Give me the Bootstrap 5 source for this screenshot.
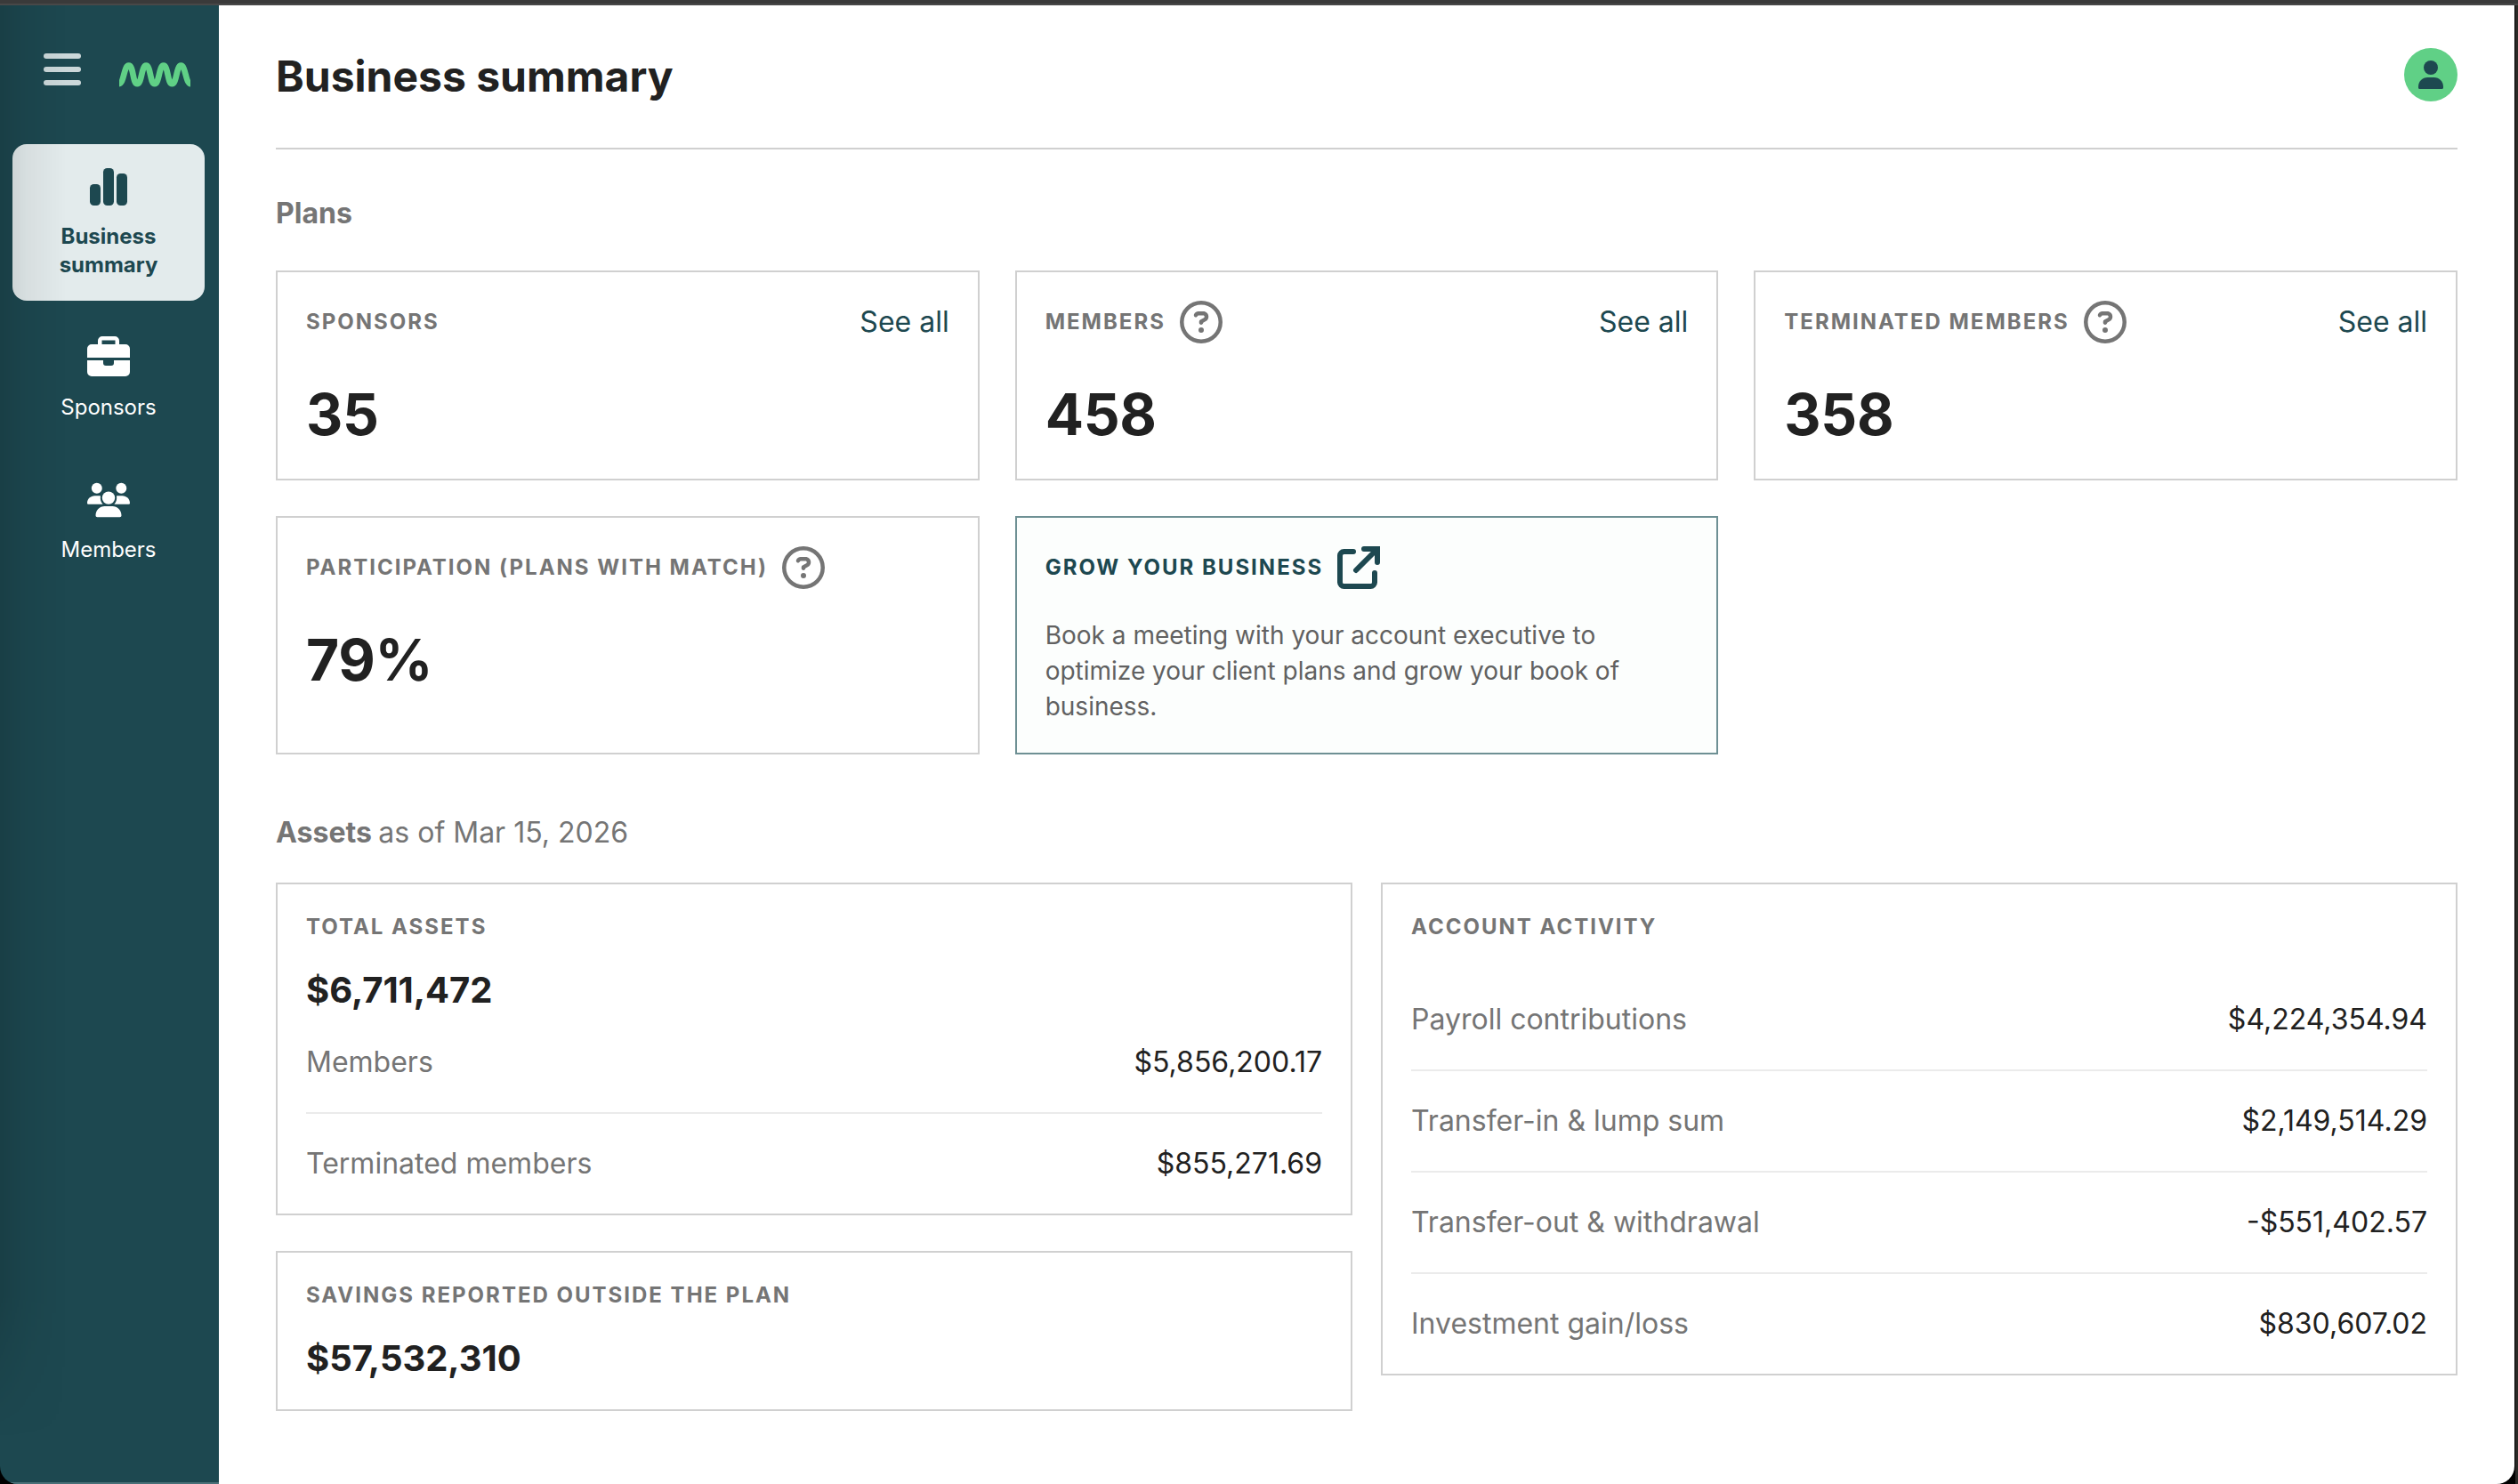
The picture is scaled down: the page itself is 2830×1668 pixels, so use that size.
<!DOCTYPE html>
<html lang="en">
<head>
<meta charset="utf-8">
<meta name="viewport" content="width=device-width, initial-scale=1">
<title>Business summary</title>
<link href="https://cdn.jsdelivr.net/npm/bootstrap@5.3.0/dist/css/bootstrap.min.css" rel="stylesheet">
<style>
  html, body { height: 100%; }
  body { background: #000; font-family: Inter, "Liberation Sans", sans-serif; font-size: 32px; line-height: 48px; color: #212121; overflow: hidden; }
  .topstrip { height: 6px; flex: none; background: #3a3a3a; border-bottom: 2px solid #484848; }
  .frame-edge { width: 4px; flex: none; background: #2a2a27; border-left: 1px solid #000; }
  .window { border-radius: 0 0 20px 20px; min-width: 0; }
  .sidebar { width: 246px; flex: none; background: #1d4850; border-bottom: 2px solid #4a7078; color: #fff; padding: 0 16px 0 14px; }
  .side-shade { width: 75px; top: 0; left: 0; bottom: 50px; background: linear-gradient(to right, rgba(0,0,0,.12), rgba(0,0,0,.05) 40%, rgba(0,0,0,0)); pointer-events: none; -webkit-mask-image: linear-gradient(to top, transparent, #000 160px); mask-image: linear-gradient(to top, transparent, #000 160px); }
  .side-top { height: 156px; padding: 54px 16px 0 35px; }
  .menu-btn { width: 42px; padding: 0; border: 0; background: none; gap: 9px; }
  .menu-btn span { height: 6px; border-radius: 3px; background: #cbd7d9; }
  .brand-wave { margin-top: 10px; }
  .side-nav { gap: 16px; }
  .side-link { padding: 24px 0; gap: 16px; font-size: 24px; line-height: 32px; color: #fff; text-align: center; text-decoration: none; border-radius: 16px; }
  .side-link svg { width: 48px; height: 48px; }
  .side-link.active { background: #e3ebec; color: #1d4850; font-weight: 700; }
  .content { padding: 48px 64px 0; background: #fff; min-width: 0; }
  .page-head { height: 114px; border-bottom: 2px solid #d0d0d0; }
  .page-head h1 { font-size: 48px; line-height: 60px; font-weight: 700; margin: 2px 0 0; }
  .sect { font-size: 32px; line-height: 48px; color: #757575; margin: 0; }
  .sect b { margin-right: -1.5px; }
  .plans { margin-top: 48px; }
  .plan-grid { display: grid; grid-template-columns: repeat(3, 1fr); gap: 40px; margin-top: 40px; }
  .panel { border: 2px solid #d0d0d0; padding: 32px; background: #fff; }
  .panel-head { height: 48px; }
  .panel-head svg { margin-left: 16px; }
  .lbl { font-size: 24px; line-height: 32px; font-weight: 700; letter-spacing: 2px; color: #757575; text-transform: uppercase; margin: 0; white-space: nowrap; }
  .see { color: #1d4850; text-decoration: none; }
  .figure-xl { font-size: 64px; line-height: 80px; font-weight: 700; margin-top: 40px; letter-spacing: -.3px; }
  .grow { border-color: #6e9094; background: #fcfefd; }
  .grow .lbl { color: #1d4850; }
  .grow p { font-size: 28px; line-height: 40px; color: #616161; margin: 32px 0 0; }
  .assets { margin-top: 64px; }
  .asset-cols { display: grid; grid-template-columns: repeat(2, minmax(0, 1fr)); gap: 32px; margin-top: 32px; }
  .stack { gap: 40px; }
  .activity .lbl { margin-bottom: 32px; }
  .figure-lg { font-size: 40px; line-height: 50px; font-weight: 700; margin-top: 30px; letter-spacing: -.05px; }
  .line-item { padding: 32px 0; border-bottom: 2px solid #ebebeb; color: #757575; }
  .line-item:last-child { border-bottom: 0; }
  .line-item span:last-child { color: #212121; }
</style>
<script src="https://cdn.jsdelivr.net/npm/bootstrap@5.3.0/dist/js/bootstrap.bundle.min.js"></script>
</head>
<body class="d-flex flex-column vh-100">
<svg class="d-none">
  <symbol id="help" viewBox="0 0 512 512"><path fill="currentColor" d="M464 256A208 208 0 1 0 48 256a208 208 0 1 0 416 0zM0 256a256 256 0 1 1 512 0A256 256 0 1 1 0 256zm169.8-90.7c7.9-22.3 29.1-37.3 52.8-37.3h58.3c34.9 0 63.1 28.3 63.1 63.1c0 22.6-12.1 43.5-31.7 54.8L280 264.4c-.2 13-10.9 23.6-24 23.6c-13.3 0-24-10.7-24-24V250.5c0-8.6 4.6-16.5 12.1-20.8l44.3-25.4c4.7-2.7 7.6-7.7 7.6-13.1c0-8.4-6.8-15.1-15.1-15.1H222.6c-3.4 0-6.4 2.1-7.5 5.3l-.4 1.2c-4.4 12.5-18.2 19-30.6 14.6s-19-18.2-14.6-30.6l.4-1.2zM224 352a32 32 0 1 1 64 0 32 32 0 1 1 -64 0z"/></symbol>
</svg>
<div class="topstrip"></div>
<div class="d-flex flex-grow-1">
  <div class="window d-flex flex-grow-1 overflow-hidden">
    <aside class="sidebar position-relative">
      <div class="side-top d-flex justify-content-between align-items-start">
        <button class="menu-btn d-flex flex-column" aria-label="Menu"><span class="w-100"></span><span class="w-100"></span><span class="w-100"></span></button>
        <svg class="brand-wave" width="80" height="28" viewBox="0 0 80 28" fill="none" stroke="#60d086" stroke-width="6.700"><path d="M-.5 24.2C5.600 24.2 5 3.700 10.700 3.700S14.800 24.2 20.2 24.2S24.800 3.700 30.2 3.700S34.400 24.2 39.800 24.2S44.400 3.700 49.800 3.700S54 24.2 59.400 24.2S64 3.700 69.400 3.700S74.400 24.2 80.500 24.2"/></svg>
      </div>
      <nav class="side-nav d-flex flex-column">
        <a class="side-link active d-flex flex-column align-items-center" href="#">
          <svg viewBox="0 0 48 48" fill="currentColor"><rect x="3" y="21" width="12" height="24" rx="4.500"/><rect x="18" y="3" width="12" height="42" rx="4.500"/><rect x="33" y="9" width="12" height="36" rx="4.500"/></svg>
          <span>Business<br>summary</span>
        </a>
        <a class="side-link d-flex flex-column align-items-center" href="#">
          <svg viewBox="0 0 48 48" fill="currentColor"><path fill-rule="evenodd" d="M17 0h14a5 5 0 0 1 5 5v4h7a5 5 0 0 1 5 5v10H0V14a5 5 0 0 1 5-5h7V5a5 5 0 0 1 5-5zM16.500 4.500V9h15V4.500z"/><path d="M0 27h18v3a3 3 0 0 0 3 3h6a3 3 0 0 0 3-3v-3h18v13a5 5 0 0 1-5 5H5a5 5 0 0 1-5-5z"/></svg>
          <span>Sponsors</span>
        </a>
        <a class="side-link d-flex flex-column align-items-center" href="#">
          <svg viewBox="0 0 48 48" fill="currentColor"><circle cx="10.800" cy="10.700" r="6"/><circle cx="38.300" cy="10.700" r="6"/><circle cx="24" cy="21.600" r="7.200"/><path d="M8.500 19.300h4.800c.6 0 1.200.1 1.700.3-.6 3.700.2 6.800 2.600 9.100H1.300A1.300 1.300 0 0 1 0 27.400C0 22.900 3.800 19.300 8.500 19.300zM39.500 19.300h-4.800c-.6 0-1.200.1-1.700.3.6 3.700-.2 6.800-2.600 9.100h16.300a1.300 1.300 0 0 0 1.300-1.300c0-4.500-3.800-8.100-8.500-8.100zM19.700 31h8.600c5.700 0 10.200 4.600 10.200 10.500a1.800 1.800 0 0 1-1.800 1.800H11.300a1.800 1.800 0 0 1-1.800-1.800C9.500 35.600 14 31 19.700 31z"/></svg>
          <span>Members</span>
        </a>
      </nav>
      <div class="side-shade position-absolute"></div>
    </aside>

    <main class="content flex-grow-1">
      <header class="page-head d-flex justify-content-between align-items-start">
        <h1>Business summary</h1>
        <svg width="60" height="60" viewBox="0 0 60 60"><circle cx="30" cy="30" r="30" fill="#60d086"/><g fill="#1d4850"><circle cx="30" cy="22" r="8"/><path d="M26.500 33h7C39.500 33 44 37.500 44 43.500v.9A1.600 1.600 0 0 1 42.400 46H17.600a1.600 1.600 0 0 1-1.600-1.600v-.9C16 37.500 20.500 33 26.500 33z"/></g></svg>
      </header>

      <h2 class="sect plans fw-bold">Plans</h2>
      <section class="plan-grid">
        <div class="panel">
          <div class="panel-head d-flex align-items-center"><h3 class="lbl">Sponsors</h3><a class="see ms-auto" href="#">See all</a></div>
          <div class="figure-xl">35</div>
        </div>
        <div class="panel">
          <div class="panel-head d-flex align-items-center"><h3 class="lbl">Members</h3><svg width="48" height="48" color="#757575"><use href="#help"/></svg><a class="see ms-auto" href="#">See all</a></div>
          <div class="figure-xl">458</div>
        </div>
        <div class="panel">
          <div class="panel-head d-flex align-items-center"><h3 class="lbl">Terminated members</h3><svg width="48" height="48" color="#757575"><use href="#help"/></svg><a class="see ms-auto" href="#">See all</a></div>
          <div class="figure-xl">358</div>
        </div>
        <div class="panel">
          <div class="panel-head d-flex align-items-center"><h3 class="lbl">Participation (plans with match)</h3><svg width="48" height="48" color="#757575"><use href="#help"/></svg></div>
          <div class="figure-xl">79%</div>
        </div>
        <div class="panel grow">
          <div class="panel-head d-flex align-items-center"><h3 class="lbl">Grow your business</h3><svg width="48" height="48" viewBox="0 0 48 48" fill="none" stroke="#1d4850" stroke-width="6" stroke-linecap="round"><path d="M18 6H7.500A4.500 4.500 0 0 0 3 10.500v30A4.500 4.500 0 0 0 7.500 45h30a4.500 4.500 0 0 0 4.500-4.500V30"/><path d="M30 3h15v15M43.500 4.500 21 27"/></svg></div>
          <p>Book a meeting with your account executive to optimize your client plans and grow your book of business.</p>
        </div>
      </section>

      <h2 class="sect assets fw-normal"><b>Assets</b> as of Mar 15, 2026</h2>
      <section class="asset-cols align-items-start">
        <div class="stack d-flex flex-column">
          <div class="panel pb-0">
            <h3 class="lbl">Total assets</h3>
            <div class="figure-lg">$6,711,472</div>
            <div class="line-item d-flex justify-content-between"><span>Members</span><span>$5,856,200.17</span></div>
            <div class="line-item d-flex justify-content-between"><span>Terminated members</span><span>$855,271.69</span></div>
          </div>
          <div class="panel">
            <h3 class="lbl">Savings reported outside the plan</h3>
            <div class="figure-lg">$57,532,310</div>
          </div>
        </div>
        <div class="panel activity pb-0">
          <h3 class="lbl">Account activity</h3>
          <div class="line-item d-flex justify-content-between"><span>Payroll contributions</span><span>$4,224,354.94</span></div>
          <div class="line-item d-flex justify-content-between"><span>Transfer-in &amp; lump sum</span><span>$2,149,514.29</span></div>
          <div class="line-item d-flex justify-content-between"><span>Transfer-out &amp; withdrawal</span><span>-$551,402.57</span></div>
          <div class="line-item d-flex justify-content-between"><span>Investment gain/loss</span><span>$830,607.02</span></div>
        </div>
      </section>
    </main>
  </div>
  <div class="frame-edge"></div>
</div>
</body>
</html>
